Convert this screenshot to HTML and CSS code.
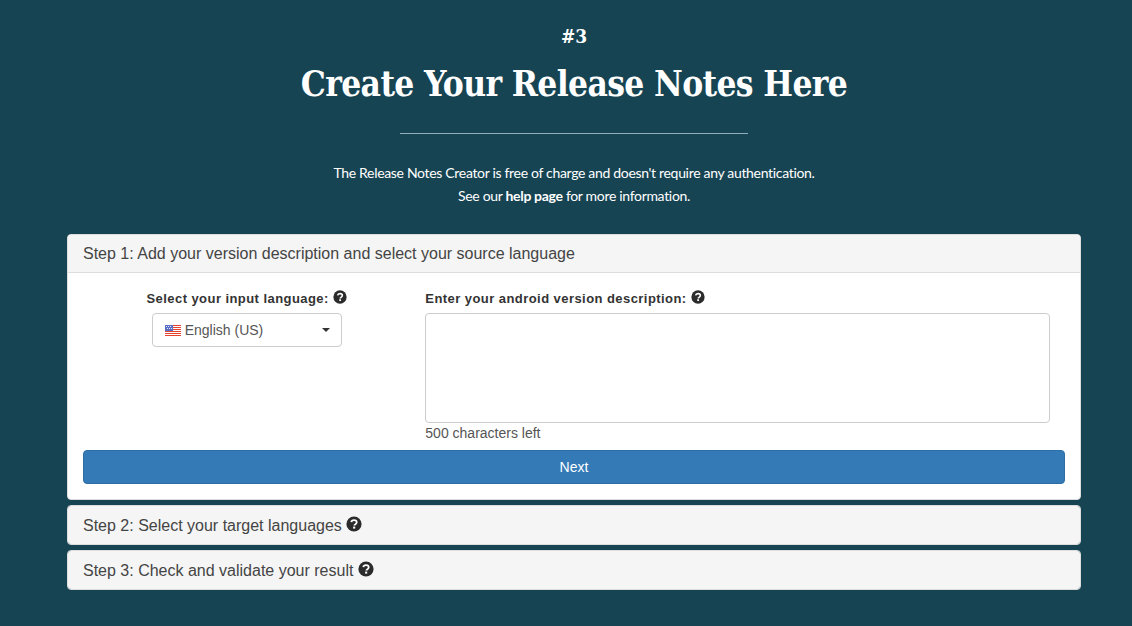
FILE: index.html
```html
<!DOCTYPE html>
<html lang="en">
<head>
<meta charset="utf-8">
<title>Release Notes Creator</title>
<link rel="stylesheet" href="styles.css">
</head>
<body>
<svg class="defs" width="0" height="0" aria-hidden="true">
  <symbol id="help" viewBox="0 0 16 16">
    <circle cx="8" cy="8" r="7.6" fill="#2b2b2b"/>
    <path d="M5.3 6.2C5.5 4.8 6.6 4.1 8 4.1c1.5 0 2.7.9 2.7 2.2 0 1.1-.7 1.6-1.5 2.1-.6.4-.9.6-.9 1.2" fill="none" stroke="#fff" stroke-width="1.8"/>
    <rect x="7.1" y="10.6" width="2.1" height="2" fill="#fff"/>
  </symbol>
</svg>
<div class="page">
<header class="hero">
  <div class="number">#3</div>
  <h1 class="title">Create Your Release Notes Here</h1>
  <hr class="rule">
  <p class="intro">The Release Notes Creator is free of charge and doesn't require any authentication.<br>See our <b>help page</b> for more information.</p>
</header>
<main class="steps">
  <section class="panel">
    <h2 class="panel-heading">Step 1: Add your version description and select your source language</h2>
    <div class="panel-body">
      <div class="columns">
        <div class="col-left">
          <div class="label">Select your input language: <svg class="help"><use href="#help"/></svg></div>
          <div class="select">
            <svg class="flag" viewBox="0 0 16 11">
              <rect width="16" height="11" fill="#fff"/>
              <g fill="#e8432f">
                <rect width="16" height="1"/><rect y="2" width="16" height="1"/><rect y="4" width="16" height="1"/><rect y="6" width="16" height="1"/><rect y="8" width="16" height="1"/><rect y="10" width="16" height="1"/>
              </g>
              <rect width="8" height="6" fill="#5a6fc5"/>
              <path d="M1 1.5h1M3 1.5h1M5 1.5h1M2 3.5h1M4 3.5h1M6 3.5h1" stroke="#e6eaf8" stroke-width="1"/>
            </svg>
            <span class="select-text">English (US)</span>
            <span class="caret"></span>
          </div>
        </div>
        <div class="col-right">
          <div class="label">Enter your android version description: <svg class="help"><use href="#help"/></svg></div>
          <textarea class="textarea"></textarea>
          <div class="counter">500 characters left</div>
        </div>
      </div>
      <button class="next" type="button">Next</button>
    </div>
  </section>
  <section class="panel">
    <h2 class="panel-heading solo">Step 2: Select your target languages <svg class="help big"><use href="#help"/></svg></h2>
  </section>
  <section class="panel">
    <h2 class="panel-heading solo">Step 3: Check and validate your result <svg class="help big"><use href="#help"/></svg></h2>
  </section>
</main>
</div>
</body>
</html>
```
FILE: styles.css
```css
* { box-sizing: border-box; }
html, body { height: 100%; }
body {
  margin: 0;
  padding-top: 24px;
  background: #174453;
  color: #333;
  font-family: "Liberation Sans", Arial, sans-serif;
  font-size: 14px;
  overflow: hidden;
}
.defs { position: absolute; }
.page { width: 1014px; margin-left: 67px; }
.hero { text-align: center; color: #fff; }
.number {
  font-family: "DejaVu Serif Condensed", "DejaVu Serif", serif;
  font-weight: 700;
  font-size: 19px;
  line-height: 24px;
}
.title {
  margin: 11px 0 0;
  font-family: "DejaVu Serif Condensed", "DejaVu Serif", serif;
  font-weight: 700;
  font-size: 35px;
  line-height: 50px;
  letter-spacing: -0.63px;
}
.rule {
  width: 348px;
  height: 1px;
  margin: 24px auto 0;
  border: 0;
  background: #8fb0b8;
}
.intro {
  margin: 27px 0 0;
  font-family: Lato, sans-serif;
  font-size: 14px;
  line-height: 23px;
  letter-spacing: -0.32px;
}
.steps {
  margin-top: 27px;
  display: flex;
  flex-direction: column;
  gap: 5px;
}
.panel {
  background: #fff;
  border: 1px solid #ddd;
  border-radius: 4px;
  overflow: hidden;
}
.panel-heading {
  margin: 0;
  height: 38px;
  padding: 0 15px;
  background: #f5f5f5;
  border-bottom: 1px solid #ddd;
  font-size: 16px;
  font-weight: 400;
  line-height: 37px;
  color: #444;
}
.panel-heading.solo { border-bottom: 0; line-height: 40px; }
.panel-body { padding: 15px; }
.columns { display: grid; grid-template-columns: 1fr 2fr; }
.col-left { display: flex; flex-direction: column; align-items: center; }
.col-right { padding: 0 15px; }
.label {
  height: 25px;
  font-weight: 700;
  font-size: 13px;
  line-height: 21px;
  letter-spacing: 0.44px;
  color: #333;
  white-space: nowrap;
}
.help { width: 14px; height: 14px; vertical-align: -1px; }
.help.big { width: 16px; height: 16px; vertical-align: -1px; }
.select {
  width: 190px;
  height: 34px;
  border: 1px solid #ccc;
  border-radius: 4px;
  background: #fff;
  display: flex;
  align-items: center;
  padding: 0 12px;
  color: #555;
  font-size: 14px;
}
.flag { width: 16px; height: 11px; margin-right: 4px; flex: none; }
.select-text { flex: 1; }
.caret {
  width: 0;
  height: 0;
  margin-right: -1px;
  border-top: 4px solid #333;
  border-left: 4px solid transparent;
  border-right: 4px solid transparent;
}
.textarea {
  display: block;
  width: 100%;
  height: 110px;
  border: 1px solid #ccc;
  border-radius: 4px;
  background: #fff;
  resize: none;
  margin: 0;
}
.counter {
  height: 27px;
  font-size: 14px;
  line-height: 20px;
  color: #555;
}
.next {
  display: block;
  width: 100%;
  height: 34px;
  border: 1px solid #2e6da4;
  border-radius: 4px;
  background: #337ab7;
  color: #fff;
  font-family: "Liberation Sans", Arial, sans-serif;
  font-size: 14px;
}
```
